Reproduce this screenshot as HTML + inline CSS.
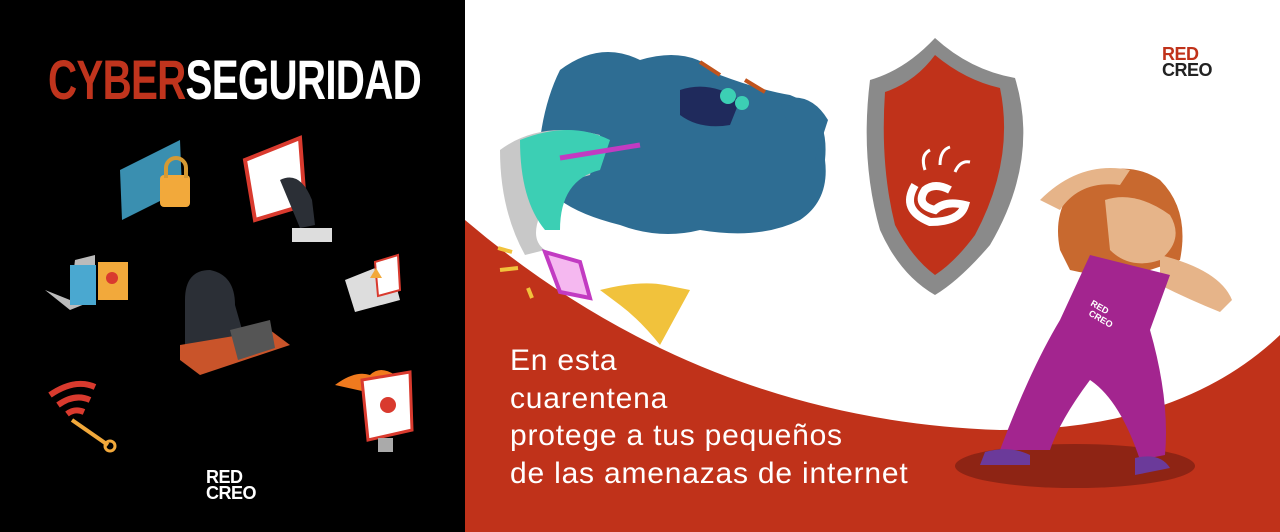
<!DOCTYPE html>
<html><head><meta charset="utf-8"><style>
html,body{margin:0;padding:0;width:1280px;height:532px;overflow:hidden;background:#fff;font-family:"Liberation Sans",sans-serif}
#left{position:absolute;left:0;top:0;width:465px;height:532px;background:#000}
#title{position:absolute;left:48px;top:48px;font-weight:bold;font-size:56px;letter-spacing:-1px;transform:scaleX(0.72);transform-origin:left top;white-space:nowrap;line-height:64px}
#title .r{color:#c0341d}#title .w{color:#fff}
.logo{position:absolute;font-weight:bold;line-height:16px;font-size:18px;letter-spacing:-0.5px}
#txt{position:absolute;left:510px;top:342px;color:#fff;font-size:30px;line-height:37.5px;letter-spacing:0.8px;white-space:nowrap}
svg{position:absolute;left:0;top:0}
</style></head><body>
<svg width="1280" height="532" viewBox="0 0 1280 532">
<path d="M465 220 Q700 420 1000 430 Q1180 430 1280 335 L1280 532 L465 532 Z" fill="#c0321a"/>
<path d="M560 70 Q600 40 640 60 Q690 45 720 75 Q760 90 790 95 Q830 110 825 160 Q830 200 800 220 Q760 240 700 230 Q660 240 620 225 Q580 215 560 200 Q520 170 540 140 Q545 100 560 70 Z" fill="#2e6d93"/>
<path d="M500 150 Q540 120 600 135 L590 175 Q550 185 540 215 Q530 240 545 250 L525 255 Q500 210 500 150 Z" fill="#c8c8c8"/>
<path d="M520 140 Q570 120 610 140 L600 170 Q560 180 560 230 L545 230 Q520 200 520 140 Z" fill="#3ccfb4"/>
<path d="M560 158 L640 145" stroke="#c23bc2" stroke-width="5" fill="none"/>
<path d="M545 252 L580 262 L590 298 L560 292 Z" fill="#f5b8f0" stroke="#c23bc2" stroke-width="4"/>
<path d="M600 290 Q640 280 665 285 L690 290 L660 345 Q640 320 620 305 Z" fill="#f1c23c"/>
<path d="M498 248 L512 252 M500 270 L518 268 M528 288 L532 298" stroke="#f1c23c" stroke-width="4"/>
<path d="M680 90 Q710 80 740 100 L730 125 Q700 130 680 115 Z" fill="#1f2a5c"/>
<circle cx="728" cy="96" r="8" fill="#3ccfb4"/><circle cx="742" cy="103" r="7" fill="#3ccfb4"/>
<path d="M700 62 L720 75 M745 80 L765 92" stroke="#c0541d" stroke-width="4"/>
<path d="M780 100 Q810 90 828 120 L815 160 Q790 140 780 100 Z" fill="#2e6d93"/>
<path d="M935 38 Q970 70 1015 78 Q1040 160 990 245 Q960 280 935 295 Q900 275 880 230 Q860 160 870 80 Q905 70 935 38 Z" fill="#8a8a8a"/>
<path d="M935 55 Q965 80 1000 88 Q1015 160 975 235 Q955 262 935 275 Q912 258 895 225 Q880 165 885 92 Q915 82 935 55 Z" fill="#c0321a"/>
<path d="M915 185 Q900 210 930 222 Q960 222 965 205 Q945 200 935 210 Q915 205 925 190 Q935 182 950 190" stroke="#fff" stroke-width="8" fill="none"/>
<path d="M925 170 q-5 -15 5 -20 M940 165 q0 -15 10 -18 M955 172 q5 -12 15 -10" stroke="#fff" stroke-width="3" fill="none"/>
<ellipse cx="1075" cy="466" rx="120" ry="22" fill="#8e2414"/>
<path d="M1060 250 Q1050 200 1090 175 Q1130 160 1160 180 Q1190 210 1180 260 L1150 270 Q1110 280 1070 270 Z" fill="#c8692f"/>
<path d="M1105 200 Q1135 190 1170 215 Q1185 240 1160 260 Q1130 270 1110 250 Z" fill="#e6b489"/>
<path d="M1040 200 Q1080 160 1130 170 L1120 185 Q1080 180 1060 210 Z" fill="#e6b489"/>
<path d="M1160 255 Q1220 270 1232 300 L1220 312 Q1190 300 1160 285 Z" fill="#e6b489"/>
<path d="M1090 255 L1170 275 L1150 330 Q1170 400 1165 455 L1140 460 Q1120 400 1090 380 Q1060 420 1050 450 L1000 450 Q1030 370 1060 320 Z" fill="#a3258f"/>
<path d="M985 452 Q1010 445 1030 455 L1030 465 L980 465 Z" fill="#6b3a9a"/>
<path d="M1135 458 Q1160 452 1170 468 L1135 475 Z" fill="#6b3a9a"/>
<text x="1090" y="305" font-size="9" fill="#fff" font-weight="bold" transform="rotate(30 1090 305)">RED</text>
<text x="1088" y="315" font-size="9" fill="#fff" font-weight="bold" transform="rotate(30 1088 315)">CREO</text>
</svg>
<div id="left"></div>
<div id="title"><span class="r">CYBER</span><span class="w">SEGURIDAD</span></div>
<svg width="1280" height="532" viewBox="0 0 1280 532">
<path d="M120 170 L180 140 L182 190 L122 220 Z" fill="#3a8fb0"/>
<rect x="160" y="175" width="30" height="32" rx="4" fill="#f2a93b"/>
<path d="M166 178 v-10 a10 10 0 0 1 20 0 v10" stroke="#d59a34" stroke-width="4" fill="none"/>
<path d="M245 160 L300 138 L305 205 L255 220 Z" fill="#fff" stroke="#d93a2e" stroke-width="4"/>
<path d="M280 180 Q300 170 312 200 L315 225 L300 228 Z" fill="#2b2f36"/>
<rect x="292" y="228" width="40" height="14" fill="#ddd"/>
<path d="M45 290 L70 300 L75 260 L95 255 L95 300 L70 310 Z" fill="#bbb"/>
<rect x="70" y="265" width="26" height="40" fill="#4aa8d0"/><rect x="98" y="262" width="30" height="38" fill="#f2a93b"/>
<circle cx="112" cy="278" r="6" fill="#d93a2e"/>
<path d="M185 300 Q185 270 210 270 Q235 275 235 305 L245 340 L185 345 Z" fill="#2b2f36"/>
<path d="M180 345 L270 330 L290 345 L200 375 L180 360 Z" fill="#c9542a"/>
<path d="M230 330 L270 320 L275 348 L238 360 Z" fill="#555"/>
<path d="M345 280 L390 262 L400 300 L355 312 Z" fill="#ddd"/><path d="M375 262 L398 255 L400 290 L378 296 Z" fill="#fff" stroke="#d93a2e" stroke-width="2"/>
<path d="M370 278 l6 -10 6 10 z" fill="#f2a93b"/>
<path d="M50 395 Q75 378 95 387 M58 405 Q75 393 90 400 M67 414 Q75 408 84 412" stroke="#d93a2e" stroke-width="6" fill="none"/>
<path d="M72 420 L108 445" stroke="#f2a93b" stroke-width="4"/><circle cx="110" cy="446" r="5" fill="none" stroke="#f2a93b" stroke-width="3"/>
<path d="M335 385 Q355 370 370 375 Q380 365 395 375 L380 395 Z" fill="#f07a1e"/>
<path d="M362 380 L410 372 L412 430 L368 440 Z" fill="#fff" stroke="#d93a2e" stroke-width="3"/>
<circle cx="388" cy="405" r="8" fill="#d93a2e"/>
<rect x="378" y="438" width="15" height="14" fill="#aaa"/>
</svg>
<div class="logo" style="left:206px;top:469px;color:#fff">RED<br>CREO</div>
<div class="logo" style="left:1162px;top:46px;color:#c0321a">RED<br><span style="color:#222">CREO</span></div>
<div id="txt">En esta<br>cuarentena<br>protege a tus pequeños<br>de las amenazas de internet</div>
</body></html>
